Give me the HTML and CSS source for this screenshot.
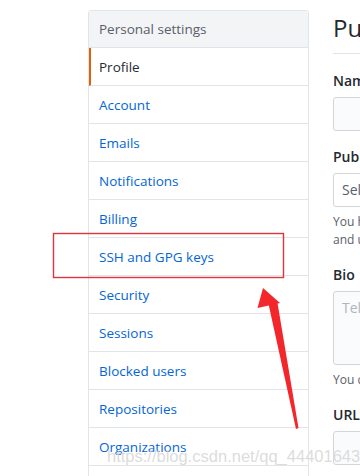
FILE: index.html
```html
<!DOCTYPE html>
<html lang="en">
<head>
    <meta charset="UTF-8">
    <meta name="viewport" content="width=device-width, initial-scale=1.0">
    <title>Your Profile</title>
    <link rel="stylesheet" href="styles.css">
</head>
<body>
    <div class="page">
        <nav class="menu">
            <div class="menu-heading">Personal settings</div>
            <a href="#" class="menu-item selected">Profile</a>
            <a href="#" class="menu-item">Account</a>
            <a href="#" class="menu-item">Emails</a>
            <a href="#" class="menu-item">Notifications</a>
            <a href="#" class="menu-item">Billing</a>
            <a href="#" class="menu-item">SSH and GPG keys</a>
            <a href="#" class="menu-item">Security</a>
            <a href="#" class="menu-item">Sessions</a>
            <a href="#" class="menu-item">Blocked users</a>
            <a href="#" class="menu-item">Repositories</a>
            <a href="#" class="menu-item">Organizations</a>
            <a href="#" class="menu-item">Saved replies</a>
        </nav>

        <div class="content">
            <div class="subhead">
                <h2>Public profile</h2>
            </div>
            <form class="profile-form">
                <div class="form-group">
                    <label for="name">Name</label>
                    <input type="text" id="name" class="form-control">
                </div>
                <div class="form-group">
                    <label for="email">Public email</label>
                    <div class="form-control select">Select a verified email to display</div>
                    <p class="note">You have set your email address to private. To toggle email privacy, go to email settings<br>and uncheck "Keep my email address private".</p>
                </div>
                <div class="form-group">
                    <label for="bio">Bio</label>
                    <textarea id="bio" class="form-control bio" placeholder="Tell us a little bit about yourself"></textarea>
                    <p class="note">You can @mention other users and organizations to link to them.</p>
                </div>
                <div class="form-group">
                    <label for="url">URL</label>
                    <input type="text" id="url" class="form-control">
                </div>
            </form>
        </div>
    </div>

    <!-- annotation drawn over the screenshot -->
    <svg class="markup" width="360" height="476" viewBox="0 0 360 476">
        <rect x="53.5" y="233.5" width="230" height="44" fill="none" stroke="#d9363e" stroke-width="1.4"/>
        <polygon points="296,429 298.5,428 277.5,303 268.5,304" fill="#f2262b"/>
        <polygon points="263,288 257.5,308 280,303" fill="#f2262b"/>
    </svg>
    <div class="watermark">https://blog.csdn.net/qq_44401643</div>
</body>
</html>
```

FILE: styles.css
```css
body {
    margin: 0;
    font-family: 'Open Sans', 'Liberation Sans', sans-serif;
    font-size: 13.5px;
    color: #24292e;
    background: #fff;
    overflow: hidden;
}

.page {
    display: flex;
    align-items: flex-start;
    padding: 10px 0 0 88px;
}

.menu {
    flex: 0 0 221px;
    box-sizing: border-box;
    display: flex;
    flex-direction: column;
    border: 1px solid #e1e4e8;
    border-radius: 3px;
}

.menu-heading {
    padding: 1px 10px 0;
    height: 35px;
    line-height: 35px;
    background-color: #f3f4f6;
    color: #586069;
    border-bottom: 1px solid #e1e4e8;
}

.menu-item {
    height: 36px;
    line-height: 36px;
    padding: 1px 10px 0;
    color: #0366d6;
    text-decoration: none;
    border-bottom: 1px solid #e1e4e8;
}

.menu-item.selected {
    color: #24292e;
    border-left: 2px solid #e36209;
    padding-left: 8px;
}

.content {
    flex: 1;
    margin-left: 24px;
    min-width: 0;
    overflow: hidden;
}

.subhead {
    border-bottom: 1px solid #e1e4e8;
    padding-bottom: 7px;
    margin-bottom: 17px;
}

.subhead h2 {
    margin: 0;
    font-size: 24px;
    font-weight: 400;
    line-height: 36px;
    white-space: nowrap;
}

.form-group {
    margin-bottom: 16px;
}

.form-group label {
    display: block;
    font-size: 14px;
    font-weight: 600;
    line-height: 20px;
    margin-bottom: 6px;
    white-space: nowrap;
}

.form-control {
    display: block;
    box-sizing: border-box;
    width: 300px;
    height: 34px;
    padding: 6px 8px;
    font-family: inherit;
    font-size: 14px;
    line-height: 20px;
    background-color: #fafbfc;
    border: 1px solid #d1d5da;
    border-radius: 3px;
    white-space: nowrap;
}

.form-control.select {
    background-color: #fff;
    color: #586069;
}

.form-control.bio {
    height: 74px;
    resize: none;
}

.bio::placeholder {
    color: #b0b5bb;
}

.note {
    margin: 6px 0 0;
    font-size: 12px;
    line-height: 18px;
    color: #586069;
    white-space: nowrap;
}

.markup {
    position: absolute;
    top: 0;
    left: 0;
    pointer-events: none;
}

.watermark {
    position: absolute;
    left: 107px;
    top: 447px;
    font-family: 'Liberation Sans', sans-serif;
    font-size: 16.5px;
    color: rgba(190, 190, 190, 0.55);
    text-shadow: 0 0 1px rgba(255, 255, 255, 0.8);
    white-space: nowrap;
    pointer-events: none;
}
```
